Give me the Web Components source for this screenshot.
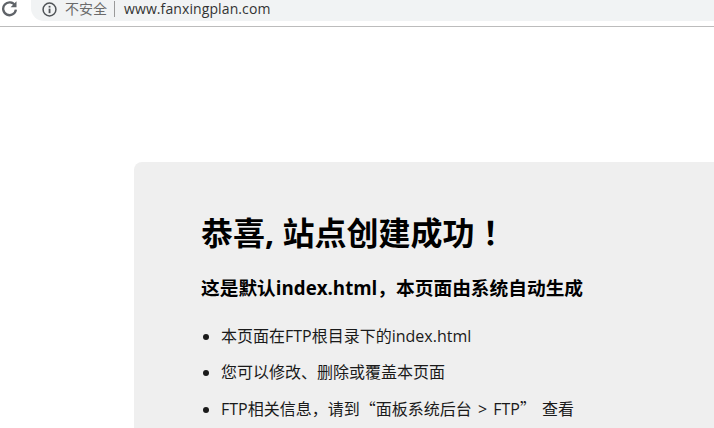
<!DOCTYPE html>
<html lang="zh-CN">
<head>
<meta charset="utf-8">
<title>站点创建成功</title>
<style>
  html, body { margin: 0; height: 100%; overflow: hidden; background: #fff; }
  body { font-family: "Open Sans", "Noto Sans CJK SC", sans-serif; }
  .cjk { font-family: "Noto Sans CJK SC", sans-serif; }
  .bang { margin-left: 8px; }
  .spaced { word-spacing: 2px; }
</style>
</head>
<body>
<browser-bar url="www.fanxingplan.com"></browser-bar>
<welcome-card>
  <span slot="title">恭喜, 站点创建成功<span class="bang">&#xFF01;</span></span>
  <span slot="subtitle">这是默认index.html&#xFF0C;本页面由系统自动生成</span>
  <li>本页面在FTP根目录下的index.html</li>
  <li>您可以修改、删除或覆盖本页面</li>
  <li class="spaced">FTP相关信息&#xFF0C;请到<span class="cjk">“</span>面板系统后台 &gt; FTP<span class="cjk">”</span> 查看</li>
</welcome-card>

<script>
const barTemplate = document.createElement('template');
barTemplate.innerHTML = `
  <style>
    :host {
      display: flex;
      align-items: flex-start;
      height: 26px;
      border-bottom: 1px solid #bcbcbc;
      background: #fff;
      font-family: "Open Sans", "Noto Sans CJK SC", sans-serif;
      overflow: hidden;
    }
    .reload {
      width: 17px;
      height: 17px;
      margin: 0 0 0 1px;
      flex: none;
    }
    .omnibox {
      flex: 1;
      display: flex;
      align-items: center;
      height: 21px;
      margin-left: 13px;
      padding: 0 0 3px 11px;
      box-sizing: border-box;
      border-radius: 0 0 0 13px;
      background: #f1f3f4;
    }
    .info { width: 15px; height: 15px; flex: none; }
    .state {
      margin-left: 8px;
      padding-right: 7px;
      border-right: 1px solid #9a9a9a;
      font-size: 14px;
      line-height: 16px;
      color: #6b6b6b;
    }
    .url {
      margin-left: 9px;
      font-size: 14px;
      line-height: 18px;
      color: #333;
      letter-spacing: 0.1px;
    }
  </style>
  <svg class="reload" viewBox="0 0 16 16" fill="none">
    <path d="M13.2 5.2A6 6 0 1 0 14 9" stroke="#5f6368" stroke-width="2.2"/>
    <path d="M14.6 1.2v5.6H9z" fill="#5f6368"/>
  </svg>
  <div class="omnibox">
    <svg class="info" viewBox="0 0 14 14" fill="none">
      <circle cx="7" cy="7" r="6" stroke="#4f5357" stroke-width="1.4"/>
      <rect x="6.2" y="6.2" width="1.7" height="4.2" fill="#4f5357"/>
      <rect x="6.2" y="3.6" width="1.7" height="1.6" fill="#4f5357"/>
    </svg>
    <span class="state">不安全</span>
    <span class="url"></span>
  </div>
`;

class BrowserBar extends HTMLElement {
  constructor() {
    super();
    this.attachShadow({ mode: 'open' }).appendChild(barTemplate.content.cloneNode(true));
  }

  connectedCallback() {
    this.shadowRoot.querySelector('.url').textContent = this.getAttribute('url');
  }
}

const cardTemplate = document.createElement('template');
cardTemplate.innerHTML = `
  <style>
    :host {
      display: block;
      width: 580px;
      height: 266px;
      margin: 135px 0 0 134px;
      padding: 48px 0 0 67px;
      box-sizing: border-box;
      overflow: hidden;
      border-radius: 8px 0 0 0;
      background: #efefef;
      color: #000;
      font-family: "Open Sans", "Noto Sans CJK SC", sans-serif;
    }
    h1 {
      margin: 0;
      font-size: 32px;
      line-height: 46px;
      font-weight: 700;
    }
    h2 {
      margin: 18px 0 0;
      font-size: 18.72px;
      line-height: 28px;
      font-weight: 700;
    }
    ul {
      margin: 22px 0 0;
      padding: 0 0 0 20px;
      font-size: 16px;
      line-height: 24px;
      color: #1a1a1a;
    }
    ::slotted(li) { margin-bottom: 12px; }
  </style>
  <h1><slot name="title"></slot></h1>
  <h2><slot name="subtitle"></slot></h2>
  <ul><slot></slot></ul>
`;

class WelcomeCard extends HTMLElement {
  constructor() {
    super();
    this.attachShadow({ mode: 'open' }).appendChild(cardTemplate.content.cloneNode(true));
  }
}

customElements.define('browser-bar', BrowserBar);
customElements.define('welcome-card', WelcomeCard);
</script>
</body>
</html>
